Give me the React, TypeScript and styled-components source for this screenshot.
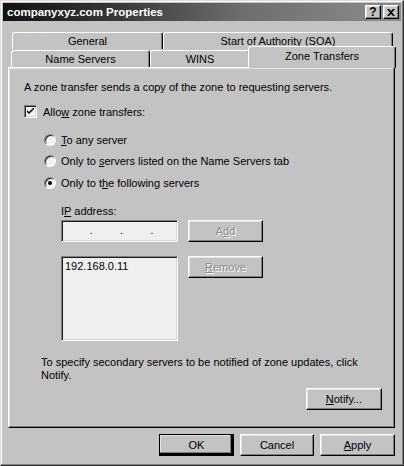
import React from 'react';
import styled, { createGlobalStyle, css } from 'styled-components';

const FACE = '#c3c3c3';

const GlobalStyle = createGlobalStyle`
  html, body {
    margin: 0;
    padding: 0;
    background: ${FACE};
  }
  body {
    font-family: "Liberation Sans", Arial, sans-serif;
    font-size: 11px;
    color: #000;
  }
`;

const raised = css`
  border-style: solid;
  border-width: 1px;
  border-color: #fff #000 #000 #fff;
  box-shadow: inset -1px -1px #808080, inset 1px 1px #e2e2e2;
`;

const sunken = css`
  border-style: solid;
  border-width: 1px;
  border-color: #808080 #fff #fff #808080;
  box-shadow: inset 1px 1px #1a1a1a, inset -1px -1px #d8d8d8;
`;

const Window = styled.div`
  width: 404px;
  height: 466px;
  box-sizing: border-box;
  background: ${FACE};
  border-style: solid;
  border-width: 1px;
  border-color: #dcdcdc #303030 #303030 #dcdcdc;
  box-shadow: inset -1px -1px #808080, inset 1px 1px #fff;
  padding: 2px;
  display: flex;
  flex-direction: column;
`;

const TitleBar = styled.div`
  height: 18px;
  display: flex;
  align-items: center;
  justify-content: space-between;
  padding: 0 2px 0 4px;
  background: linear-gradient(90deg, #111 0%, #3a3a3a 30%, #6e6e6e 60%, #8c8c8c 100%);
`;

const Title = styled.span`
  color: #fff;
  font-weight: bold;
  font-size: 11.5px;
`;

const Caps = styled.div`
  display: flex;
  gap: 2px;
`;

const CapButton = styled.div`
  width: 16px;
  height: 14px;
  box-sizing: border-box;
  ${raised};
  background: ${FACE};
  display: flex;
  align-items: center;
  justify-content: center;
  font-weight: bold;
  font-size: 12px;
  line-height: 1;
`;

const Body = styled.div`
  flex: 1;
  display: flex;
  flex-direction: column;
  padding: 11px 6px 0 5px;
`;

const TabRow = styled.div<{ $indent: number }>`
  display: flex;
  align-items: flex-end;
  padding-left: ${p => p.$indent}px;
  height: ${p => (p.$indent > 3 ? 17 : 18)}px;
`;

const Tab = styled.div<{ $w: number; $active?: boolean }>`
  width: ${p => p.$w}px;
  height: 17px;
  box-sizing: border-box;
  border-style: solid;
  border-width: 1px 1px 0 1px;
  border-color: #fff #000 transparent #fff;
  border-radius: 3px 3px 0 0;
  box-shadow: inset -1px 0 #808080;
  background: ${FACE};
  display: flex;
  align-items: center;
  justify-content: center;
  ${p =>
    p.$active &&
    css`
      margin: 0 -1px -1px -2px;
      position: relative;
      z-index: 1;
      height: 22px;
      padding-bottom: 3px;
    `}
`;

const Panel = styled.div`
  flex: 0 0 361px;
  box-sizing: border-box;
  ${raised};
  padding: 12px 12px 13px 15px;
  display: flex;
  flex-direction: column;
`;

const Text = styled.div`
  line-height: 14px;
`;

const Underline = styled.u`
  text-decoration: underline;
`;

const CheckRow = styled.label`
  display: flex;
  align-items: center;
  gap: 6px;
  margin-top: 11px;
`;

const CheckBox = styled.span`
  width: 13px;
  height: 13px;
  box-sizing: border-box;
  ${sunken};
  background: #f2f2f2;
  display: flex;
  align-items: center;
  justify-content: center;
`;

const RadioGroup = styled.div`
  display: flex;
  flex-direction: column;
  margin-top: 11px;
  padding-left: 20px;
`;

const RadioRow = styled.label`
  height: 21.5px;
  display: flex;
  align-items: center;
  gap: 5px;
`;

const Radio = styled.span<{ $on?: boolean }>`
  width: 12px;
  height: 12px;
  box-sizing: border-box;
  border-radius: 50%;
  border-style: solid;
  border-width: 1px;
  border-color: #808080 #fff #fff #808080;
  box-shadow: inset 1px 1px #202020;
  background: #f2f2f2;
  display: flex;
  align-items: center;
  justify-content: center;
  &::after {
    content: '';
    width: 4px;
    height: 4px;
    border-radius: 50%;
    background: ${p => (p.$on ? '#000' : 'transparent')};
  }
`;

const IpSection = styled.div`
  display: flex;
  flex-direction: column;
  padding-left: 37px;
  margin-top: 10px;
`;

const FieldRow = styled.div<{ $gap: number }>`
  display: flex;
  align-items: flex-start;
  gap: 10px;
  margin-top: ${p => p.$gap}px;
`;

const IpField = styled.div`
  width: 117px;
  height: 22px;
  box-sizing: border-box;
  ${sunken};
  background: #efefef;
  display: flex;
  align-items: center;
  justify-content: space-around;
  padding: 0 10px 0 14px;
  font-size: 10px;
`;

const ListBox = styled.div`
  width: 117px;
  height: 85px;
  box-sizing: border-box;
  ${sunken};
  background: #efefef;
  padding: 3px 3px;
`;

const Button = styled.button<{ $default?: boolean; $disabled?: boolean; $w?: number }>`
  width: ${p => p.$w ?? 75}px;
  height: 22px;
  box-sizing: border-box;
  ${raised};
  background: ${FACE};
  font: inherit;
  padding: 0;
  color: ${p => (p.$disabled ? '#8a8a8a' : '#000')};
  text-shadow: ${p => (p.$disabled ? '1px 1px #fff' : 'none')};
  ${p =>
    p.$default &&
    css`
      outline: 1px solid #000;
      outline-offset: -1px;
      box-shadow: inset -2px -2px #000, inset -3px -3px #808080, inset 1px 1px #e2e2e2;
    `}
`;

const Notes = styled.div`
  margin-top: 15px;
  padding-left: 17px;
  line-height: 13px;
`;

const NotifyRow = styled.div`
  display: flex;
  justify-content: flex-end;
  margin-top: 6px;
`;

const Footer = styled.div`
  display: flex;
  justify-content: flex-end;
  gap: 6px;
  margin-top: 6px;
`;

const CheckMark = () => (
  <svg width="7" height="7" viewBox="0 0 7 7">
    <path d="M0 2 L0 4 L2 6 L7 1 L7 -1 L2 4 Z" fill="#000" />
  </svg>
);

const CloseGlyph = () => (
  <svg width="8" height="7" viewBox="0 0 8 7">
    <path d="M0 0 H2 L4 2 L6 0 H8 L5 3.5 L8 7 H6 L4 5 L2 7 H0 L3 3.5 Z" fill="#000" />
  </svg>
);

const radios = [
  { pre: '', key: 'T', post: 'o any server', on: false },
  { pre: 'Only to ', key: 's', post: 'ervers listed on the Name Servers tab', on: false },
  { pre: 'Only to t', key: 'h', post: 'e following servers', on: true },
];

export default function App() {
  return (
    <>
      <GlobalStyle />
      <Window>
        <TitleBar>
          <Title>companyxyz.com Properties</Title>
          <Caps>
            <CapButton>?</CapButton>
            <CapButton>
              <CloseGlyph />
            </CapButton>
          </Caps>
        </TitleBar>
        <Body>
          <TabRow $indent={4}>
            <Tab $w={151}>General</Tab>
            <Tab $w={230}>Start of Authority (SOA)</Tab>
          </TabRow>
          <TabRow $indent={3}>
            <Tab $w={139}>Name Servers</Tab>
            <Tab $w={100}>WINS</Tab>
            <Tab $w={148} $active>
              Zone Transfers
            </Tab>
          </TabRow>
          <Panel>
            <Text>A zone transfer sends a copy of the zone to requesting servers.</Text>
            <CheckRow>
              <CheckBox>
                <CheckMark />
              </CheckBox>
              <span>
                Allo<Underline>w</Underline> zone transfers:
              </span>
            </CheckRow>
            <RadioGroup>
              {radios.map(r => (
                <RadioRow key={r.post}>
                  <Radio $on={r.on} />
                  <span>
                    {r.pre}
                    <Underline>{r.key}</Underline>
                    {r.post}
                  </span>
                </RadioRow>
              ))}
            </RadioGroup>
            <IpSection>
              <Text>
                I<Underline>P</Underline> address:
              </Text>
              <FieldRow $gap={2}>
                <IpField>
                  <span>.</span>
                  <span>.</span>
                  <span>.</span>
                </IpField>
                <Button $disabled>
                  A<Underline>d</Underline>d
                </Button>
              </FieldRow>
              <FieldRow $gap={14}>
                <ListBox>192.168.0.11</ListBox>
                <Button $disabled>
                  <Underline>R</Underline>emove
                </Button>
              </FieldRow>
            </IpSection>
            <Notes>
              To specify secondary servers to be notified of zone updates, click
              <br />
              Notify.
            </Notes>
            <NotifyRow>
              <Button $w={76}>
                <Underline>N</Underline>otify...
              </Button>
            </NotifyRow>
          </Panel>
          <Footer>
            <Button $default>OK</Button>
            <Button $w={74}>Cancel</Button>
            <Button>
              <Underline>A</Underline>pply
            </Button>
          </Footer>
        </Body>
      </Window>
    </>
  );
}
